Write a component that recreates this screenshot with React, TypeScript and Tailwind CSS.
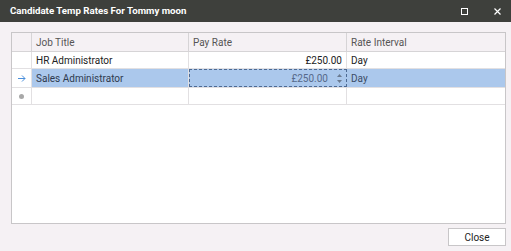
import { useState } from "react";

type RateRow = {
  id: number;
  jobTitle: string;
  payRate: string;
  interval: string;
};

const rows: RateRow[] = [
  { id: 1, jobTitle: "HR Administrator", payRate: "£250.00", interval: "Day" },
  { id: 2, jobTitle: "Sales Administrator", payRate: "£250.00", interval: "Day" }
];

const cols = "grid grid-cols-[20px_157px_158px_1fr]";

export default function App() {
  const [selected] = useState(2);

  return (
    <div
      className="flex h-[251px] w-[511px] flex-col bg-[#f5f1f4] text-[10px] text-[#222]"
      style={{ fontFamily: "Roboto, sans-serif" }}
    >
      <div className="flex h-[22px] items-center bg-[#3e403c] pl-[10px] pr-[10px] text-white">
        <span className="flex-1 text-[9.7px] font-bold">
          Candidate Temp Rates For Tommy moon
        </span>
        <span className="mr-[26px] h-[7px] w-[7px] border border-white" />
        <svg width="7" height="7" viewBox="0 0 7 7">
          <path d="M0.5 0.5L6.5 6.5M6.5 0.5L0.5 6.5" stroke="white" strokeWidth="1.2" />
        </svg>
      </div>

      <div className="flex flex-1 flex-col pl-[11px] pr-[5px] pb-[5px] pt-[10px]">
        <div className="flex flex-1 flex-col border border-[#c8c6c8] bg-white">
          <div className={`${cols} h-[19px] border-b border-[#d6d4d6] bg-[#f5f1f4] text-[#555]`}>
            <div className="border-r border-[#d6d4d6]" />
            <div className="flex items-center border-r border-[#d6d4d6] pl-[4px]">Job Title</div>
            <div className="flex items-center border-r border-[#d6d4d6] pl-[4px]">Pay Rate</div>
            <div className="flex items-center pl-[4px]">Rate Interval</div>
          </div>

          {rows.map((r) => {
            const sel = r.id === selected;
            return (
              <div
                key={r.id}
                className={`${cols} border-b border-[#e2e0e2] ${sel ? "h-[19px]" : "h-[17px]"}`}
              >
                <div className="flex items-center justify-center border-r border-[#e2e0e2]">
                  {sel ? (
                    <svg width="8" height="7" viewBox="0 0 8 7">
                      <path d="M0 3.5H7M4 0.5L7 3.5L4 6.5" stroke="#4a8fdb" fill="none" strokeWidth="1" />
                    </svg>
                  ) : null}
                </div>
                <div
                  className={`flex items-center border-r border-[#e2e0e2] pl-[4px] ${sel ? "bg-[#abc8ec] text-[#2e3a4e]" : ""}`}
                >
                  {r.jobTitle}
                </div>
                {sel ? (
                  <div className="flex items-center justify-end border border-dashed border-[#4d6a93] bg-[#abc8ec] pr-[2px]">
                    <span className="pr-[9px] text-[#56698a]">{r.payRate}</span>
                    <div className="flex flex-col items-center justify-center gap-[3px] pr-[2px]">
                      <svg width="5" height="3" viewBox="0 0 5 3">
                        <path d="M0 3L2.5 0L5 3Z" fill="#6a7a90" />
                      </svg>
                      <svg width="5" height="3" viewBox="0 0 5 3">
                        <path d="M0 0L2.5 3L5 0Z" fill="#6a7a90" />
                      </svg>
                    </div>
                  </div>
                ) : (
                  <div className="flex items-center justify-end border-r border-[#e2e0e2] pr-[4px]">
                    {r.payRate}
                  </div>
                )}
                <div className={`flex items-center pl-[4px] ${sel ? "bg-[#abc8ec] text-[#3c4c66]" : ""}`}>
                  {r.interval}
                </div>
              </div>
            );
          })}

          <div className={`${cols} h-[17px] border-b border-[#e2e0e2]`}>
            <div className="flex items-center justify-center border-r border-[#e2e0e2]">
              <span className="h-[5px] w-[5px] rounded-full bg-[#a8a8a8]" />
            </div>
            <div className="border-r border-[#e2e0e2]" />
            <div className="border-r border-[#e2e0e2]" />
            <div />
          </div>
        </div>

        <div className="flex justify-end pt-[4px]">
          <button className="h-[18px] w-[58px] border border-[#c8c6c8] bg-white text-[10px] text-[#222]">
            Close
          </button>
        </div>
      </div>
    </div>
  );
}
